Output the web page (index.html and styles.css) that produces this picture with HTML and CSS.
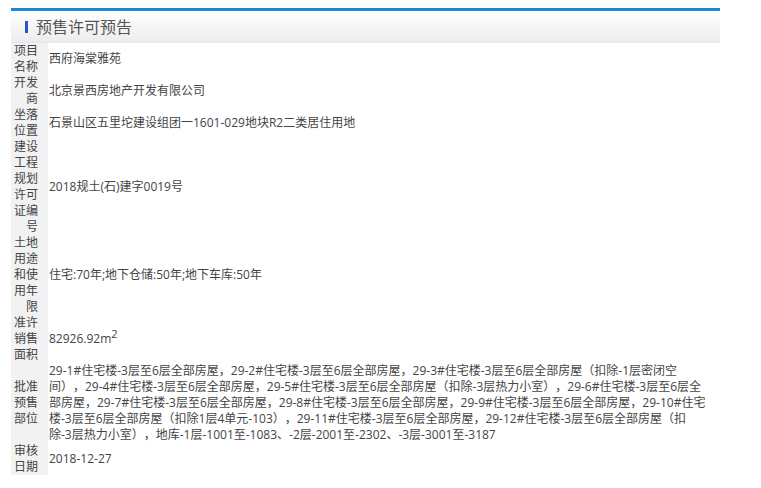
FILE: index.html
```html
<!DOCTYPE html>
<html lang="zh-CN">
<head>
    <meta charset="UTF-8">
    <title>预售许可预告</title>
    <link rel="stylesheet" href="styles.css">
</head>
<body>
    <div class="panel">
        <div class="panel-head">
            <span class="mark"></span>
            <h2>预售许可预告</h2>
        </div>
        <table class="info">
            <tr>
                <th>项目名称</th>
                <td>西府海棠雅苑</td>
            </tr>
            <tr>
                <th>开发商</th>
                <td>北京景西房地产开发有限公司</td>
            </tr>
            <tr>
                <th>坐落位置</th>
                <td>石景山区五里坨建设组团一1601-029地块R2二类居住用地</td>
            </tr>
            <tr>
                <th>建设工程规划许可证编号</th>
                <td>2018规土(石)建字0019号</td>
            </tr>
            <tr>
                <th>土地用途和使用年限</th>
                <td>住宅:70年;地下仓储:50年;地下车库:50年</td>
            </tr>
            <tr>
                <th>准许销售面积</th>
                <td>82926.92m<sup>2</sup></td>
            </tr>
            <tr>
                <th>批准预售部位</th>
                <td>29-1#住宅楼-3层至6层全部房屋，29-2#住宅楼-3层至6层全部房屋，29-3#住宅楼-3层至6层全部房屋（扣除-1层密闭空间），29-4#住宅楼-3层至6层全部房屋，29-5#住宅楼-3层至6层全部房屋（扣除-3层热力小室），29-6#住宅楼-3层至6层全部房屋，29-7#住宅楼-3层至6层全部房屋，29-8#住宅楼-3层至6层全部房屋，29-9#住宅楼-3层至6层全部房屋，29-10#住宅楼-3层至6层全部房屋（扣除1层4单元-103），29-11#住宅楼-3层至6层全部房屋，29-12#住宅楼-3层至6层全部房屋（扣除-3层热力小室），地库-1层-1001至-1083、-2层-2001至-2302、-3层-3001至-3187</td>
            </tr>
            <tr>
                <th>审核日期</th>
                <td>2018-12-27</td>
            </tr>
        </table>
    </div>
</body>
</html>
```

FILE: styles.css
```css
body {
    margin: 0;
    padding: 8px 0 0 11px;
    background: #fff;
    font-family: "Open Sans", "Noto Sans CJK SC", sans-serif;
    font-size: 12px;
    color: #444;
    text-spacing-trim: space-all;
}
.panel {
    width: 709px;
}
.panel-head {
    height: 31px;
    border-top: 3px solid #1a88d6;
    background: linear-gradient(#ffffff, #ececec);
    border-bottom: 1px solid #e6e6e6;
    display: flex;
    align-items: center;
    padding-left: 14px;
}
.mark {
    width: 3px;
    height: 12px;
    background: #2656d0;
    margin-right: 8px;
}
h2 {
    margin: 0;
    font-size: 16px;
    font-weight: normal;
    color: #555;
    line-height: 20px;
}
.info {
    border-collapse: collapse;
    width: 100%;
}
.info th {
    width: 26px;
    padding: 0 10px 0 1px;
    background: #f2f2f2;
    font-weight: normal;
    text-align: right;
    line-height: 16px;
    vertical-align: middle;
}
.info td {
    padding: 0 13px 0 1px;
    line-height: 16px;
    vertical-align: middle;
}
sup {
    font-size: 11px;
    line-height: 0;
}
```
